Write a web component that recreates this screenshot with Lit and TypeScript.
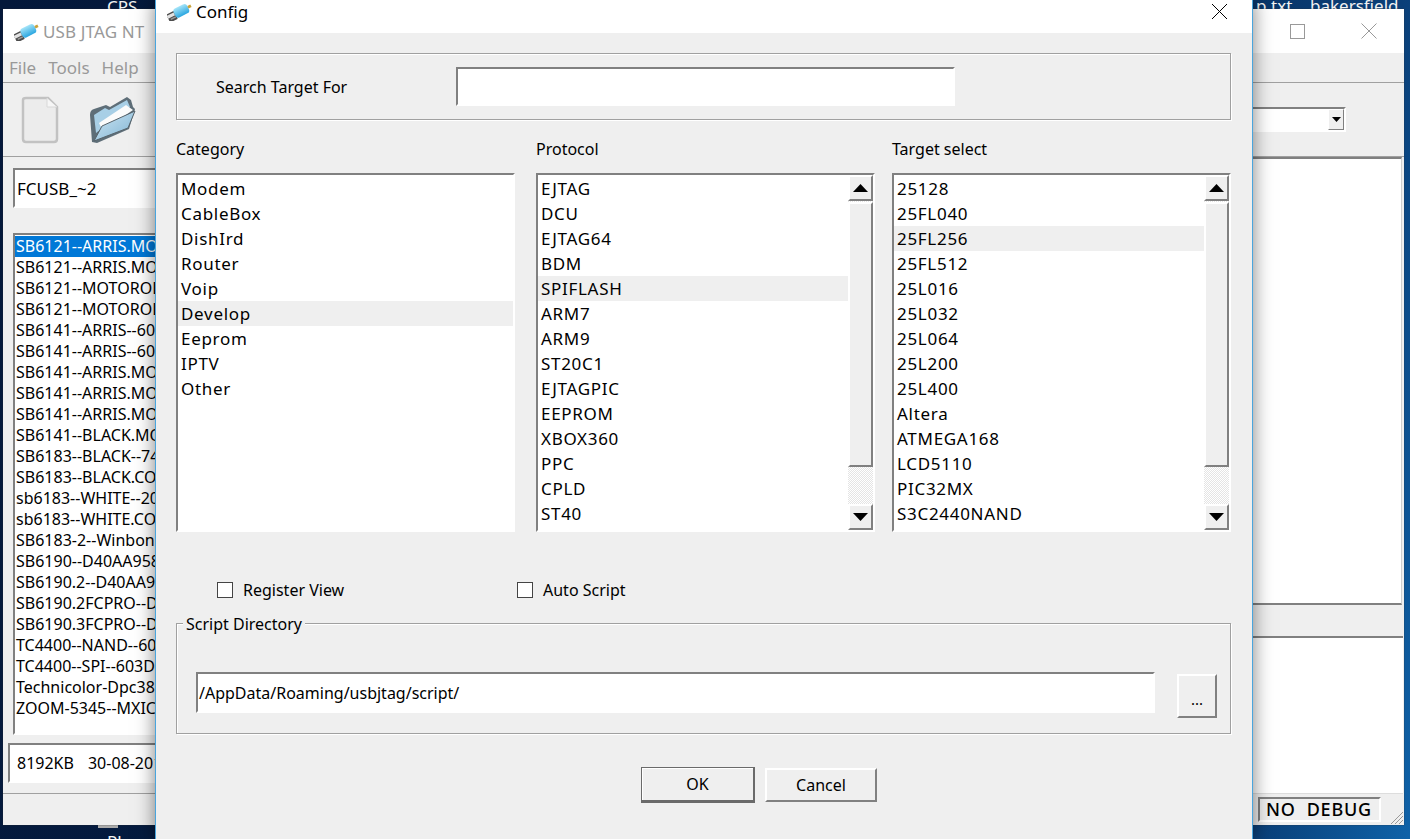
import { LitElement, html, css, svg } from "lit";
import { customElement } from "lit/decorators.js";

const usbIcon = svg`<svg class="usb" viewBox="0 0 26 20" width="25" height="19">
  <defs><linearGradient id="ub" x1="0" y1="0" x2="0" y2="1"><stop offset="0" stop-color="#a4e4f8"/><stop offset="1" stop-color="#2aa6e0"/></linearGradient></defs>
  <g transform="rotate(-27 13 10)">
    <rect x="-1" y="6.5" width="9" height="9.5" rx="1" fill="#4c4c4c"/><rect x="-1" y="8" width="8" height="3.5" fill="#e2e2e2"/><rect x="1" y="12.5" width="6" height="1.5" fill="#9a9a9a"/>
    <rect x="7" y="5" width="16" height="10.5" rx="3.5" fill="url(#ub)"/>
    <rect x="23" y="8.5" width="3.5" height="3" fill="#c8a23a"/>
  </g></svg>`;

const left = [
  "SB6121--ARRIS.MOTOROLA", "SB6121--ARRIS.MOTOROLA", "SB6121--MOTOROLA.MXIC", "SB6121--MOTOROLA.SPAN",
  "SB6141--ARRIS--60:01", "SB6141--ARRIS--60:02", "SB6141--ARRIS.MOTOROLA", "SB6141--ARRIS.MOTOROLA",
  "SB6141--ARRIS.MOTOROLA", "SB6141--BLACK.MOTOROLA", "SB6183--BLACK--74:85", "SB6183--BLACK.COMPAL",
  "sb6183--WHITE--20:3D", "sb6183--WHITE.COMPAL", "SB6183-2--Winbond.SPI", "SB6190--D40AA958.SPI",
  "SB6190.2--D40AA958.SPI", "SB6190.2FCPRO--D40AA958", "SB6190.3FCPRO--D40AA958", "TC4400--NAND--603D",
  "TC4400--SPI--603D", "Technicolor-Dpc3825", "ZOOM-5345--MXIC",
];
const categories = ["Modem", "CableBox", "DishIrd", "Router", "Voip", "Develop", "Eeprom", "IPTV", "Other"];
const protocols = ["EJTAG", "DCU", "EJTAG64", "BDM", "SPIFLASH", "ARM7", "ARM9", "ST20C1", "EJTAGPIC", "EEPROM", "XBOX360", "PPC", "CPLD", "ST40"];
const targets = ["25128", "25FL040", "25FL256", "25FL512", "25L016", "25L032", "25L064", "25L200", "25L400", "Altera", "ATMEGA168", "LCD5110", "PIC32MX", "S3C2440NAND"];

@customElement("app-root")
export class AppRoot extends LitElement {
  static styles = css`
    :host { display: block; width: 1410px; height: 839px; position: relative; overflow: hidden;
      background: linear-gradient(100deg, #04183a 0%, #05214a 60%, #0a3f78 90%, #0f62a8 100%);
      font-family: "Noto Sans", "Open Sans", sans-serif; font-size: 16px; color: #000; }
    * { box-sizing: border-box; }
    .deskicon { position: absolute; color: #f2f2f2; font-size: 17px; line-height: 18px; white-space: nowrap; }
    .cps { left: 107px; top: -2px; }
    .txt { left: 1256px; top: -3px; }
    .bak { left: 1310px; top: -3px; }
    .bot { left: 107px; top: 833px; }
    .chip { position: absolute; left: 98px; top: 825px; width: 20px; height: 3px; background: #aaa; }

    .back { position: absolute; left: 3px; top: 9px; width: 1401px; height: 816px; background: #efefef;
      display: flex; flex-direction: column; box-shadow: 0 0 1px #333; }
    .btitle { height: 44px; background: #fff; display: flex; align-items: center; padding: 0 0 0 11px; color: #999; font-size: 17px; gap: 4px; flex: none; letter-spacing: .15px; }
    .btitle .name { flex: 1; }
    .wbtn { width: 15px; height: 15px; border: 1px solid #999; margin-right: 52px; flex: none; }
    .wx { margin-right: 27px; flex: none; display: block; }
    .menu { height: 30px; display: flex; gap: 12px; padding: 0 6px; align-items: center; color: #999; font-size: 17px; border-bottom: 1px solid #a0a0a0; flex: none; }
    .tools { height: 74px; border-bottom: 1px solid #a0a0a0; display: flex; align-items: center; gap: 24px; padding: 0 0 0 17px; flex: none; position: relative; }
    .tools .spacer { flex: 1; }
    .tcombo { width: 300px; height: 25px; margin-right: 58px; background: #fff; border: 2px solid; border-color: #808080 #fff #fff #808080; display: flex; justify-content: flex-end; align-items: center; }
    .tcombo .arr { width: 16px; height: 21px; background: #efefef; border: 1px solid; border-color: #fff #808080 #808080 #fff; display: flex; align-items: center; justify-content: center; }
    .main { flex: 1; display: grid; grid-template-columns: 400px 1fr; min-height: 0; }
    .lcol { padding: 11px 0 0 10px; display: flex; flex-direction: column; border-bottom: 1px solid #a0a0a0; height: 637px; }
    .combo { height: 40px; background: #fff; border: 2px solid; border-color: #808080 #fff #fff #808080; display: flex; align-items: center; padding-left: 2px; flex: none; font-size: 17px; }
    .llist { margin-top: 25px; height: 502px; background: #fff; border: 2px solid; border-color: #808080 #fff #fff #808080; padding-top: 1px; flex: none; }
    .llist div { height: 21px; line-height: 21px; white-space: nowrap; overflow: hidden; padding-left: 1px; }
    .llist div.sel { background: #0078d7; color: #fff; }
    .info { margin: 8px 0 0 -5px; height: 40px; background: #fff; border: 2px solid; border-color: #808080 #fff #fff #808080; display: flex; align-items: center; padding-left: 7px; gap: 14px; flex: none; white-space: nowrap; }
    .rcol { display: flex; flex-direction: column; padding-right: 2px; min-width: 0; }
    .rtop { height: 448px; background: #fff; border-style: solid; border-width: 2px 1px 2px 0; border-color: #808080 #cfcfcf #808080 #808080; flex: none; }
    .rbot { margin: 31px -1px 0 0; flex: 1; background: #fff; border-top: 2px solid #808080; border-bottom: 1px solid #ddd; }
    .status { height: 32px; flex: none; display: flex; justify-content: flex-end; align-items: flex-end; position: relative; padding: 0 23px 3px 0; }
    .nodebug { width: 123px; height: 25px; border: 2px solid; border-color: #808080 #fff #fff #808080; padding-left: 6px; line-height: 21px; font-size: 18px; font-weight: 500; letter-spacing: .8px; white-space: pre; }
    .grip { position: absolute; right: 0; bottom: 0; display: block; }

    .dlg { position: absolute; left: 155px; top: 0; width: 1098px; height: 839px; background: #efefef; display: flex; flex-direction: column;
      border-left: 1px solid #4aa5dd; border-right: 1px solid #4aa5dd; box-shadow: 0 0 18px rgba(0,0,0,.5); }
    .dtitle { height: 33px; background: #fff; display: flex; align-items: center; padding: 0 0 10px 11px; gap: 4px; font-size: 17px; flex: none; position: relative; }
    .dtitle .name { flex: 1; }
    .dtitle .x { margin-right: 24px; display: block; }
    .dbody { padding: 20px 21px 0 20px; display: flex; flex-direction: column; flex: 1; }
    .group { border: 1px solid #a0a0a0; box-shadow: 1px 1px 0 #fff, inset 1px 1px 0 #fff; flex: none; }
    .search { height: 67px; display: flex; align-items: center; padding-left: 39px; }
    .search .lbl { width: 240px; }
    .sinput { width: 499px; height: 39px; }
    .sunk { background: #fff; border: 2px solid; border-color: #808080 #fff #fff #808080; }
    .cols { display: flex; margin-top: 18px; flex: none; }
    .col { width: 339px; flex: none; }
    .col.c2 { margin-left: 21px; }
    .col.c3 { margin-left: 17px; }
    .col .hd { height: 23px; line-height: 23px; margin-bottom: 12px; }
    .lb { height: 359px; display: flex; padding-top: 1px; }
    .lb .items { flex: 1; min-width: 0; }
    .row { height: 25px; line-height: 25px; padding-left: 3px; font-size: 17px; letter-spacing: .7px; white-space: nowrap; overflow: hidden; }
    .row.hl { background: #efefef; }
    .sb { width: 25px; flex: none; display: flex; flex-direction: column; margin-top: -1px; background: repeating-conic-gradient(#fff 0 25%, #e4e4e4 0 50%) 0 0 / 2px 2px; }
    .sb .btn { height: 26px; background: #efefef; border: 2px solid; border-color: #fff #808080 #808080 #fff; display: flex; align-items: center; justify-content: center; flex: none; }
    .sb .thumb { height: 265px; background: #efefef; border: 2px solid; border-color: #fff #808080 #808080 #fff; flex: none; margin-top: 1px; }
    .sb .fill { flex: 1; }
    .checks { display: flex; margin-top: 49px; padding-left: 41px; height: 17px; align-items: center; flex: none; }
    .check { display: flex; align-items: center; gap: 10px; width: 300px; }
    .box { width: 16px; height: 16px; background: #fff; border: 1px solid #444; flex: none; }
    .dirgroup { margin-top: 25px; height: 111px; position: relative; padding: 48px 13px 0 19px; display: flex; gap: 22px; align-items: flex-start; }
    .legend { position: absolute; left: 6px; top: -11px; background: #efefef; padding: 0 3px; line-height: 22px; }
    .dinput { width: 959px; height: 41px; display: flex; align-items: center; padding-left: 1px; white-space: nowrap; flex: none; }
    .more { width: 40px; height: 44px; background: #efefef; border: 2px solid; border-color: #fff #808080 #808080 #fff; margin-top: 2px; text-align: center; line-height: 46px; flex: none; font-size: 15px; }
    .actions { display: flex; gap: 10px; margin-top: 33px; padding-left: 465px; align-items: center; }
    .bt { height: 34px; background: #efefef; border: 2px solid; border-color: #fff #808080 #808080 #fff; text-align: center; line-height: 30px; }
    .ok { width: 114px; height: 36px; border: 1px solid #6a6a6a; border-bottom-width: 3px; border-right-width: 2px; line-height: 33px; box-shadow: inset 1px 1px 0 #fff; }
    .cancel { width: 112px; }
  `;

  private scrollbar() {
    const tri = (up: boolean) => svg`<svg width="15" height="8" viewBox="0 0 15 8"><polygon points="${up ? "0,8 15,8 7.5,0" : "0,0 15,0 7.5,8"}" fill="#000"/></svg>`;
    return html`<div class="sb"><div class="btn">${tri(true)}</div><div class="thumb"></div><div class="fill"></div><div class="btn">${tri(false)}</div></div>`;
  }

  private listbox(items: string[], hl: string, sb: boolean) {
    return html`<div class="lb sunk"><div class="items">${items.map((i) => html`<div class="row ${i === hl ? "hl" : ""}">${i}</div>`)}</div>${sb ? this.scrollbar() : ""}</div>`;
  }

  render() {
    return html`
      <div class="deskicon cps">CPS</div>
      <div class="deskicon txt">p.txt</div>
      <div class="deskicon bak">bakersfield</div>
      <div class="deskicon bot">Ph</div>
      <div class="chip"></div>

      <section class="back">
        <div class="btitle">${usbIcon}<span class="name">USB JTAG NT</span>
          <span class="wbtn"></span>
          <svg class="wx" width="16" height="16" viewBox="0 0 16 16"><path d="M.5 .5 15.5 15.5M15.5 .5 .5 15.5" stroke="#999" fill="none"/></svg>
        </div>
        <div class="menu"><span>File</span><span>Tools</span><span>Help</span></div>
        <div class="tools">
          <svg width="40" height="48" viewBox="0 0 40 48"><path d="M3 4Q3 2 6 2H28L37 11V43Q37 46 34 46H6Q3 46 3 43Z" fill="#ececec" stroke="#c2c2c2" stroke-width="2.5"/><path d="M27 2V11H37" fill="#f6f6f6" stroke="#d8d8d8"/></svg>
          <svg width="48" height="50" viewBox="0 0 48 50" style="margin-left:5px">
            <defs><linearGradient id="fd" x1="0" y1="0" x2="1" y2="1"><stop offset="0" stop-color="#cfe6f3"/><stop offset="1" stop-color="#7fb4d4"/></linearGradient></defs>
            <path d="M1 20Q1 15 5 14L17 10 21 12 38 2 42 5 44 12 46 14 40 34 8 48 3 47Z" fill="#5e6e78"/>
            <path d="M5 20 16 13 20 15 38 5 41 12 7 38Z" fill="#a8cfe6"/>
            <path d="M10 28 37 10 44 15 14 36Z" fill="#fbfbfb"/>
            <path d="M5 46 13 31 46 16 39 33Z" fill="url(#fd)" stroke="#56636b"/>
          </svg>
          <span class="spacer"></span>
          <div class="tcombo"><span class="arr"><svg width="9" height="5" viewBox="0 0 9 5"><polygon points="0,0 9,0 4.5,5"/></svg></span></div>
        </div>
        <div class="main">
          <div class="lcol">
            <div class="combo">FCUSB_~2</div>
            <div class="llist">${left.map((t, i) => html`<div class="${i === 0 ? "sel" : ""}">${t}</div>`)}</div>
            <div class="info"><span>8192KB</span><span>30-08-2019</span></div>
          </div>
          <div class="rcol">
            <div class="rtop"></div>
            <div class="rbot"></div>
          </div>
        </div>
        <div class="status">
          <div class="nodebug">NO  DEBUG</div>
          <svg class="grip" width="14" height="14" viewBox="0 0 14 14"><path d="M13 1 1 13M13 5 5 13M13 9 9 13" stroke="#999" fill="none"/></svg>
        </div>
      </section>

      <section class="dlg">
        <div class="dtitle">${usbIcon}<span class="name">Config</span>
          <svg class="x" width="17" height="17" viewBox="0 0 17 17"><path d="M1 1 16 16M16 1 1 16" stroke="#000" fill="none"/></svg>
        </div>
        <div class="dbody">
          <div class="group search"><span class="lbl">Search Target For</span><div class="sinput sunk"></div></div>
          <div class="cols">
            <div class="col"><div class="hd">Category</div>${this.listbox(categories, "Develop", false)}</div>
            <div class="col c2"><div class="hd">Protocol</div>${this.listbox(protocols, "SPIFLASH", true)}</div>
            <div class="col c3"><div class="hd">Target select</div>${this.listbox(targets, "25FL256", true)}</div>
          </div>
          <div class="checks">
            <label class="check"><span class="box"></span>Register View</label>
            <label class="check"><span class="box"></span>Auto Script</label>
          </div>
          <div class="group dirgroup">
            <span class="legend">Script Directory</span>
            <div class="dinput sunk">/AppData/Roaming/usbjtag/script/</div>
            <div class="more">...</div>
          </div>
          <div class="actions"><div class="bt ok">OK</div><div class="bt cancel">Cancel</div></div>
        </div>
      </section>
    `;
  }
}
